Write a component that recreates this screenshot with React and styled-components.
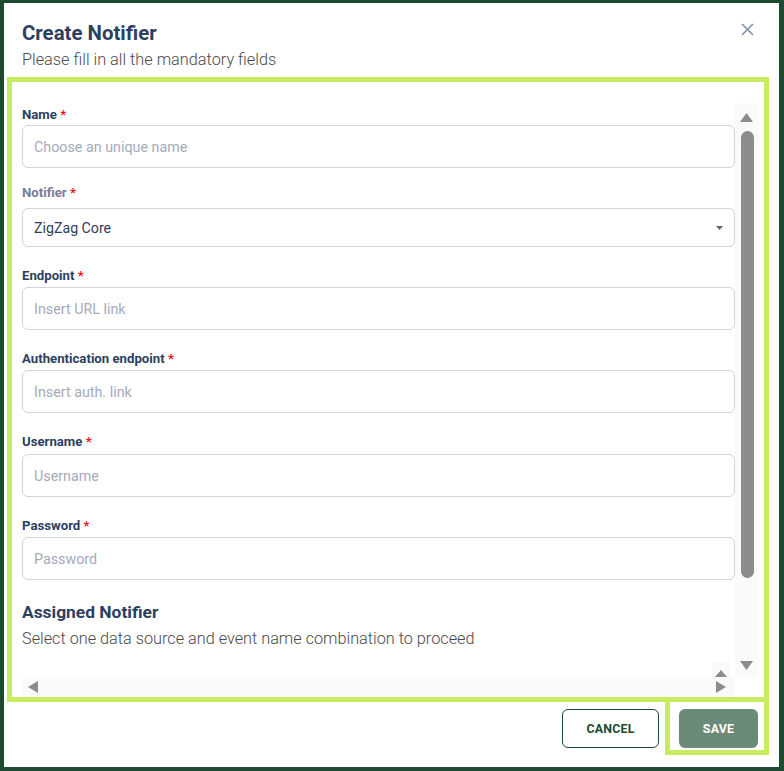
import React from 'react';
import styled, { createGlobalStyle } from 'styled-components';

const GlobalStyle = createGlobalStyle`
  html, body {
    margin: 0;
    padding: 0;
    background: #1d4a30;
    font-family: Roboto, "Liberation Sans", Arial, sans-serif;
  }
  * {
    box-sizing: border-box;
  }
`;

const fields = [
  { label: 'Name', placeholder: 'Choose an unique name', top: 4, gap: 2 },
  { label: 'Endpoint', placeholder: 'Insert URL link', top: 21, gap: 3 },
  { label: 'Authentication endpoint', placeholder: 'Insert auth. link', top: 21, gap: 3 },
  { label: 'Username', placeholder: 'Username', top: 21, gap: 4 },
  { label: 'Password', placeholder: 'Password', top: 21, gap: 3 },
];

const App = () => {
  const [first, ...rest] = fields;
  return (
    <>
      <GlobalStyle />
      <Dialog>
        <Header>
          <div>
            <Title>Create Notifier</Title>
            <Subtitle>Please fill in all the mandatory fields</Subtitle>
          </div>
          <CloseButton aria-label="close">
            <svg width="13" height="13" viewBox="0 0 13 13">
              <path d="M1 1 L12 12 M12 1 L1 12" stroke="#7f8cab" strokeWidth="1.5" />
            </svg>
          </CloseButton>
        </Header>

        <Body>
          <ScrollFrame>
            <ScrollRow>
              <Content>
                <Field top={first.top}>
                  <Label gap={first.gap}>
                    {first.label} <Req>*</Req>
                  </Label>
                  <Input placeholder={first.placeholder} />
                </Field>

                <Field top={17}>
                  <Label gap={7} muted>
                    Notifier <Req>*</Req>
                  </Label>
                  <Select>
                    <span>ZigZag Core</span>
                    <svg width="7" height="4" viewBox="0 0 7 4">
                      <path d="M0 0 L7 0 L3.5 4 Z" fill="#666" />
                    </svg>
                  </Select>
                </Field>

                {rest.map((f) => (
                  <Field key={f.label} top={f.top}>
                    <Label gap={f.gap}>
                      {f.label} <Req>*</Req>
                    </Label>
                    <Input placeholder={f.placeholder} />
                  </Field>
                ))}

                <SectionTitle>Assigned Notifier</SectionTitle>
                <SectionText>Select one data source and event name combination to proceed</SectionText>
              </Content>

              <VScroll>
                <Arrow dir="up" />
                <Thumb />
                <Arrow dir="down" />
              </VScroll>
            </ScrollRow>

            <HScroll>
              <Arrow dir="left" />
              <HScrollEnd>
                <Arrow dir="up" small />
                <Arrow dir="right" />
              </HScrollEnd>
            </HScroll>
          </ScrollFrame>
        </Body>

        <Footer>
          <CancelButton>CANCEL</CancelButton>
          <SaveHighlight>
            <SaveButton>SAVE</SaveButton>
          </SaveHighlight>
        </Footer>
      </Dialog>
    </>
  );
};

const Dialog = styled.div`
  width: 775px;
  height: 764px;
  margin: 3px 0 0 4px;
  background: #fff;
  display: flex;
  flex-direction: column;
`;

const Header = styled.div`
  display: flex;
  justify-content: space-between;
  align-items: flex-start;
  padding: 18px 25px 0 18px;
`;

const Title = styled.h2`
  margin: 0;
  font-size: 20.4px;
  line-height: 24px;
  font-weight: 700;
  color: #2d3f5f;
`;

const Subtitle = styled.p`
  margin: 5px 0 0;
  font-size: 16.3px;
  line-height: 20px;
  font-weight: 300;
  color: #4a4a4a;
`;

const CloseButton = styled.button`
  border: 0;
  background: transparent;
  padding: 0;
  margin-top: 2px;
  width: 13px;
  height: 13px;
  display: flex;
  cursor: pointer;
`;

const Body = styled.div`
  margin: 7px 10px 0 3px;
  border: 5px solid #c8ec5f;
  padding: 21px 6px 0 10px;
  height: 625px;
`;

const ScrollFrame = styled.div`
  display: flex;
  flex-direction: column;
  height: 594px;
`;

const ScrollRow = styled.div`
  display: flex;
  height: 574px;
`;

const Content = styled.div`
  width: 713px;
  overflow: hidden;
`;

const Field = styled.div`
  margin-top: ${(p) => p.top}px;
  display: flex;
  flex-direction: column;
`;

const Label = styled.label`
  font-size: 13.2px;
  line-height: 16px;
  font-weight: 700;
  color: ${(p) => (p.muted ? '#787c98' : '#2d3f5f')};
  margin-bottom: ${(p) => p.gap}px;
`;

const Req = styled.span`
  color: #e8141c;
`;

const Input = styled.input`
  height: 43px;
  width: 100%;
  border: 1px solid #d3d3dc;
  border-radius: 6px;
  padding: 0 11px;
  font-family: inherit;
  font-size: 14.3px;
  color: #2f3d5c;
  outline: none;
  &::placeholder {
    color: #a5abba;
  }
`;

const Select = styled.div`
  height: 39px;
  border: 1px solid #d3d3dc;
  border-radius: 6px;
  padding: 0 11px 0 11px;
  display: flex;
  align-items: center;
  justify-content: space-between;
  font-size: 14.2px;
  color: #2f3d5c;
`;

const SectionTitle = styled.h3`
  margin: 22px 0 0;
  font-size: 17.4px;
  line-height: 20px;
  font-weight: 700;
  color: #2d3f5f;
`;

const SectionText = styled.p`
  margin: 7px 0 0;
  font-size: 16.25px;
  line-height: 20px;
  font-weight: 300;
  color: #4a4a4a;
`;

const VScroll = styled.div`
  width: 23px;
  background: #fafafa;
  display: flex;
  flex-direction: column;
  align-items: center;
  padding: 10px 0 7px;
`;

const Thumb = styled.div`
  width: 13px;
  height: 447px;
  margin: 9px 0 83px 1px;
  border-radius: 7px;
  background: #8c8c8c;
`;

const arrowShapes = {
  up: 'polygon(50% 0, 100% 100%, 0 100%)',
  down: 'polygon(0 0, 100% 0, 50% 100%)',
  left: 'polygon(100% 0, 100% 100%, 0 50%)',
  right: 'polygon(0 0, 100% 50%, 0 100%)',
};

const Arrow = styled.span`
  display: block;
  flex: none;
  width: ${(p) => (p.dir === 'left' || p.dir === 'right' ? 10 : p.small ? 12 : 13)}px;
  height: ${(p) => (p.dir === 'left' || p.dir === 'right' ? 12 : p.small ? 7 : 9)}px;
  background: #8c8c8c;
  clip-path: ${(p) => arrowShapes[p.dir]};
`;

const HScroll = styled.div`
  width: 713px;
  height: 20px;
  background: #fafafa;
  display: flex;
  align-items: center;
  justify-content: space-between;
  padding: 0 8px 0 6px;
`;

const HScrollEnd = styled.div`
  align-self: flex-end;
  display: flex;
  flex-direction: column;
  align-items: center;
  gap: 4px;
  margin-bottom: 4px;
  padding: 8px 3px 0;
  margin-right: -3px;
  background: #fafafa;
`;

const Footer = styled.div`
  display: flex;
  justify-content: flex-end;
  align-items: flex-start;
  padding-right: 10px;
`;

const CancelButton = styled.button`
  margin: 7px 6px 0 0;
  width: 97px;
  height: 39px;
  border: 1px solid #1d4a30;
  border-radius: 6px;
  background: #fff;
  color: #1d4a30;
  font-family: inherit;
  font-size: 12.4px;
  font-weight: 700;
  letter-spacing: 0.2px;
  cursor: pointer;
`;

const SaveHighlight = styled.div`
  margin-top: -5px;
  border: 5px solid #c8ec5f;
  padding: 7px 6px 2px 9px;
`;

const SaveButton = styled.button`
  width: 79px;
  height: 39px;
  border: 0;
  border-radius: 6px;
  background: #6b8a78;
  color: #fff;
  font-family: inherit;
  font-size: 12.4px;
  font-weight: 700;
  letter-spacing: 0.2px;
  cursor: pointer;
`;

export default App;
